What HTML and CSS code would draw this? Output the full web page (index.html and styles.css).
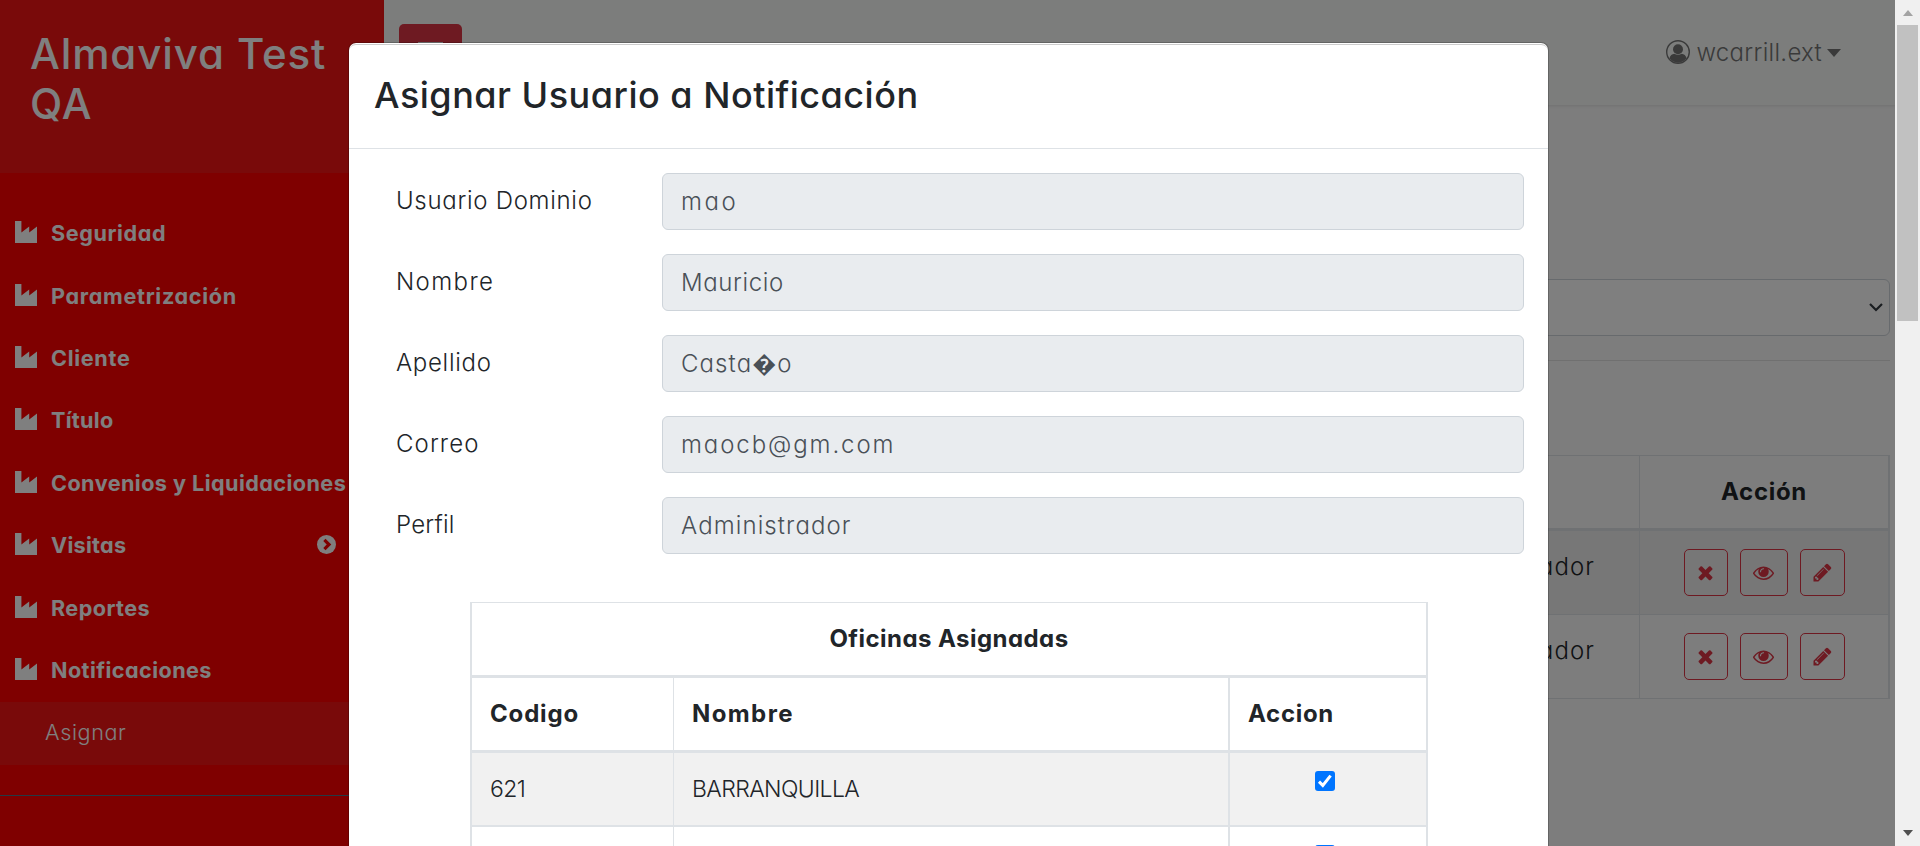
FILE: index.html
```html
<!DOCTYPE html>
<html lang="es">
<head>
<meta charset="utf-8">
<title>Almaviva Test QA</title>
<link rel="stylesheet" href="styles.css">
</head>
<body>
<svg class="defs" width="0" height="0">
  <symbol id="industry" viewBox="0 0 22 22"><path d="M0 0H6.400V11.600L14.200 5.600V11.600L22 5.600V22H0Z"/></symbol>
  <symbol id="times" viewBox="0 0 1792 1792"><path d="M1490 1322q0 40-28 68l-136 136q-28 28-68 28t-68-28l-294-294-294 294q-28 28-68 28t-68-28l-136-136q-28-28-28-68t28-68l294-294-294-294q-28-28-28-68t28-68l136-136q28-28 68-28t68 28l294 294 294-294q28-28 68-28t68 28l136 136q28 28 28 68t-28 68l-294 294 294 294q28 28 28 68z"/></symbol>
  <symbol id="eye" viewBox="0 0 1792 1792"><path d="M1664 960q-152-236-381-353 61 104 61 225 0 185-131.500 316.500t-316.500 131.500-316.500-131.500-131.500-316.500q0-121 61-225-229 117-381 353 133 205 333.500 326.500t434.500 121.500 434.500-121.500 333.500-326.500zm-720-384q0-20-14-34t-34-14q-125 0-214.500 89.500t-89.500 214.500q0 20 14 34t34 14 34-14 14-34q0-86 61-147t147-61q20 0 34-14t14-34zm848 384q0 34-20 69-140 230-376.500 368.500t-499.500 138.500-499.500-139-376.500-368q-20-35-20-69t20-69q140-229 376.500-368t499.500-139 499.500 139 376.500 368q20 35 20 69z"/></symbol>
  <symbol id="pencil" viewBox="0 0 1792 1792"><path d="M491 1536l91-91-235-235-91 91v107h128v128h107zm523-928q0-22-22-22-10 0-17 7l-542 542q-7 7-7 17 0 22 22 22 10 0 17-7l542-542q7-7 7-17zm-54-192l416 416-832 832h-416v-416zm683 96q0 53-37 90l-166 166-416-416 166-165q36-38 90-38 53 0 91 38l235 234q37 39 37 91z"/></symbol>
</svg>
<div class="screen">
  <div class="page">
    <nav class="sidebar">
      <div class="brand">Almaviva Test QA</div>
      <ul class="menu">
        <li><svg class="ind"><use href="#industry"/></svg><span class="s6">Seguridad</span></li>
        <li><svg class="ind"><use href="#industry"/></svg><span class="s7">Parametrización</span></li>
        <li><svg class="ind"><use href="#industry"/></svg><span class="s7">Cliente</span></li>
        <li><svg class="ind"><use href="#industry"/></svg><span class="s3">Título</span></li>
        <li><svg class="ind"><use href="#industry"/></svg><span class="s4">Convenios y Liquidaciones</span></li>
        <li><svg class="ind"><use href="#industry"/></svg><span class="s3">Visitas</span><svg class="chev" viewBox="0 0 19 19"><circle cx="9.500" cy="9.500" r="9.500"/><path d="M7.400 4.900l4.600 4.600-4.600 4.600"/></svg></li>
        <li><svg class="ind"><use href="#industry"/></svg><span class="s4">Reportes</span></li>
        <li><svg class="ind"><use href="#industry"/></svg><span class="s4">Notificaciones</span></li>
        <li class="active"><span class="s6">Asignar</span></li>
      </ul>
    </nav>
    <main class="content">
      <header class="topbar">
        <div class="toggle"><i></i><i></i><i></i></div>
        <div class="user">
          <svg class="avatar" viewBox="0 0 24 24"><circle cx="12" cy="12" r="11.300" fill="none" stroke="#757575" stroke-width="1.400"/><circle cx="12" cy="9.300" r="5"/><path d="M3.500 18.300C4 15.500 6 14 8.300 13.700c2.200 1.500 5.200 1.500 7.400 0 2.300.3 4.300 1.800 4.800 4.600A10.500 10.500 0 0 1 3.500 18.300Z"/></svg>
          <span class="s3">wcarrill.ext</span><b class="caret"></b>
        </div>
      </header>
      <div class="select"><svg width="14" height="9" viewBox="0 0 14 9"><path d="M1 1l6 6 6-6" fill="none" stroke="#343a40" stroke-width="2.200"/></svg></div>
      <div class="rule"></div>
      <div class="grid">
        <div class="row head"><div></div><div class="act"><span class="s7">Acción</span></div></div>
        <div class="row odd"><div class="role s11">Administrador</div><div class="act"><span class="btn b1"><svg><use href="#times"/></svg></span><span class="btn b2"><svg><use href="#eye"/></svg></span><span class="btn b3"><svg><use href="#pencil"/></svg></span></div></div>
        <div class="row"><div class="role s11">Administrador</div><div class="act"><span class="btn b1"><svg><use href="#times"/></svg></span><span class="btn b2"><svg><use href="#eye"/></svg></span><span class="btn b3"><svg><use href="#pencil"/></svg></span></div></div>
      </div>
    </main>
  </div>
  <div class="backdrop"></div>
  <section class="modal">
    <h5 class="title">Asignar Usuario a Notificación</h5>
    <div class="form">
      <div class="field"><label class="s7">Usuario Dominio</label><div class="input s25">mao</div></div>
      <div class="field"><label class="s14">Nombre</label><div class="input s6">Mauricio</div></div>
      <div class="field"><label class="s7">Apellido</label><div class="input s11">Casta�o</div></div>
      <div class="field"><label class="s11">Correo</label><div class="input s19">maocb@gm.com</div></div>
      <div class="field"><label class="s2">Perfil</label><div class="input s11">Administrador</div></div>
    </div>
    <div class="offices">
      <div class="orow cap"><div class="s4">Oficinas Asignadas</div></div>
      <div class="orow oh"><div class="s8">Codigo</div><div class="s14">Nombre</div><div class="s7">Accion</div></div>
      <div class="orow od"><div class="code">621</div><div class="city">BARRANQUILLA</div><div class="chk"><span class="box"><svg viewBox="0 0 20 20"><path d="M4 10.600l3.800 3.800L15.600 4.600" fill="none" stroke="#fff" stroke-width="3"/></svg></span></div></div>
      <div class="orow"><div></div><div></div><div class="chk"><span class="box"></span></div></div>
    </div>
  </section>
  <div class="scroll"><b class="up"></b><b class="thumb"></b><b class="down"></b></div>
</div>
</body>
</html>
```
FILE: styles.css
```css
* { box-sizing: border-box; }
body { margin: 0; font-family: Inter, "Noto Sans", sans-serif; font-feature-settings: "cv11"; font-weight: 340; font-size: 24px; line-height: 36px; color: #212529; }
.defs { position: absolute; }
.screen { position: relative; width: 1920px; height: 846px; overflow: hidden; }
.page { display: flex; width: 1895px; height: 846px; background: #fafafa; }

.sidebar { flex: none; width: 384px; background: #f00; color: #fff; }
.brand { height: 173px; padding: 29px 30px; font-size: 42px; font-weight: 500; line-height: 50.4px; letter-spacing: .9px; background: #f21414; }
.menu { list-style: none; margin: 0; padding: 30px 0; height: 623px; border-bottom: 1px solid #47748b; font-size: 21.6px; font-weight: 700; }
.menu li { display: flex; align-items: center; height: 62.4px; padding-left: 15px; white-space: nowrap; }
.menu span { margin-top: -2px; }
.menu .active { padding-left: 45px; font-weight: 340; background: #f21414; }
.ind { width: 22px; height: 22px; margin: -4px 14px 0 0; fill: #fff; }
.chev { width: 19px; height: 19px; margin: -3px 48px 0 auto; fill: #fff; }
.chev path { fill: none; stroke: #f00; stroke-width: 3.2; }

.content { flex: 1; }
.topbar { display: flex; justify-content: space-between; height: 105px; padding: 24px 54px 0 15px; background: #f8fbf9; box-shadow: 1px 1px 3px rgba(0, 0, 0, .1); }
.toggle { display: flex; flex-direction: column; gap: 6px; width: 63px; height: 57px; padding: 18px 19px; border-radius: 5px; background: #dc3545; }
.toggle i { height: 3px; background: #fff; }
.user { display: flex; align-items: center; height: 57px; color: #757575; }
.avatar { width: 24px; height: 24px; margin: -1px 6px 0 0; fill: #757575; }
.caret { margin-left: 5px; border: 7.5px solid transparent; border-top: 8px solid #757575; border-bottom: 0; }
.select { display: flex; justify-content: flex-end; align-items: center; height: 57px; margin: 174px 5px 0 15px; padding-right: 6px; border: 1px solid #ced4da; border-radius: 6px; background: #fff; }
.rule { height: 1px; margin: 24px 5px 94px 15px; background: #e1e1e1; }
.grid { margin: 0 5px 0 15px; border: 1px solid #dee2e6; border-right-width: 2px; border-bottom: 0; }
.row { display: grid; grid-template-columns: 1fr 249px; height: 84px; border-bottom: 1px solid #dee2e6; }
.head { height: 75px; border-bottom: 3px solid #dee2e6; font-weight: 700; }
.row.odd { height: 84px; background: #eeeeee; }
.act { display: flex; justify-content: center; align-items: center; border-left: 1px solid #dee2e6; }
.role { padding: 18px 44px 0 0; text-align: right; }
.btn { display: grid; place-items: center; height: 47px; border: 1px solid #dc3545; border-radius: 5px; }
.btn svg { width: 21px; height: 21px; fill: #dc3545; }
.b1 { width: 44px; margin-right: 12px; }
.b2 { width: 48px; margin-right: 12px; }
.b3 { width: 45px; }

.backdrop { position: absolute; inset: 0 25px 0 0; background: rgba(0, 0, 0, .5); }

.modal { position: absolute; left: 348px; top: 42px; width: 1201px; height: 850px; border: 1px solid rgba(0, 0, 0, .2); border-radius: 8px; background: #fff; background-clip: padding-box; }
.title { height: 105px; margin: 1px 0 0; padding: 23px 25px 0; border-top: 1px solid #ccc; border-bottom: 1px solid #dee2e6; border-radius: 7px 7px 0 0; font-size: 36px; font-weight: 500; line-height: 54px; letter-spacing: .5px; }
.form { display: grid; gap: 24px; padding: 24px 24px 0 47px; }
.field { display: flex; height: 57px; }
.field label { width: 266px; padding-top: 10px; }
.input { flex: 1; padding: 10px 18px; border: 1px solid #ced4da; border-radius: 6px; background: #e9ecef; color: #495057; }
.offices { width: 958px; margin: 48px 0 0 121px; border: 2px solid #dee2e6; border-top-width: 1px; }
.orow { display: grid; grid-template-columns: 202px 556px 1fr; height: 75px; border-bottom: 3px solid #dee2e6; }
.orow > div { padding: 18px 18px 0; border-right: 1px solid #dee2e6; }
.orow > div:nth-child(2) { border-right-width: 2px; }
.orow > div:last-child { border-right: 0; }
.cap { grid-template-columns: 1fr; text-align: center; font-weight: 700; }
.oh { font-weight: 700; }
.od { height: 74px; border-bottom-width: 2px; background: #f1f1f1; }
.orow > .chk { display: flex; justify-content: center; padding-right: 25px; }
.box { width: 20px; height: 20px; border-radius: 3px; background: #0075ff; }
.box svg { display: block; }
.code, .city { font-size: 23px; letter-spacing: -.6px; }

.scroll { position: absolute; right: 0; top: 0; width: 25px; height: 846px; display: flex; flex-direction: column; align-items: center; background: #f0f0f0; }
.up { margin: 10px 0 9px; border: 5.5px solid transparent; border-bottom: 6px solid #a3a3a3; border-top: 0; }
.thumb { width: 21px; height: 296px; background: #c1c1c1; }
.down { margin: auto 0 10px; border: 5.5px solid transparent; border-top: 6px solid #505050; border-bottom: 0; }

.s2 { letter-spacing: .2px; }
.s3 { letter-spacing: .3px; }
.s4 { letter-spacing: .45px; }
.s6 { letter-spacing: .6px; }
.s7 { letter-spacing: .7px; }
.s8 { letter-spacing: .83px; }
.s11 { letter-spacing: 1.1px; }
.s14 { letter-spacing: 1.4px; }
.s19 { letter-spacing: 1.9px; }
.s25 { letter-spacing: 2.5px; }
```
